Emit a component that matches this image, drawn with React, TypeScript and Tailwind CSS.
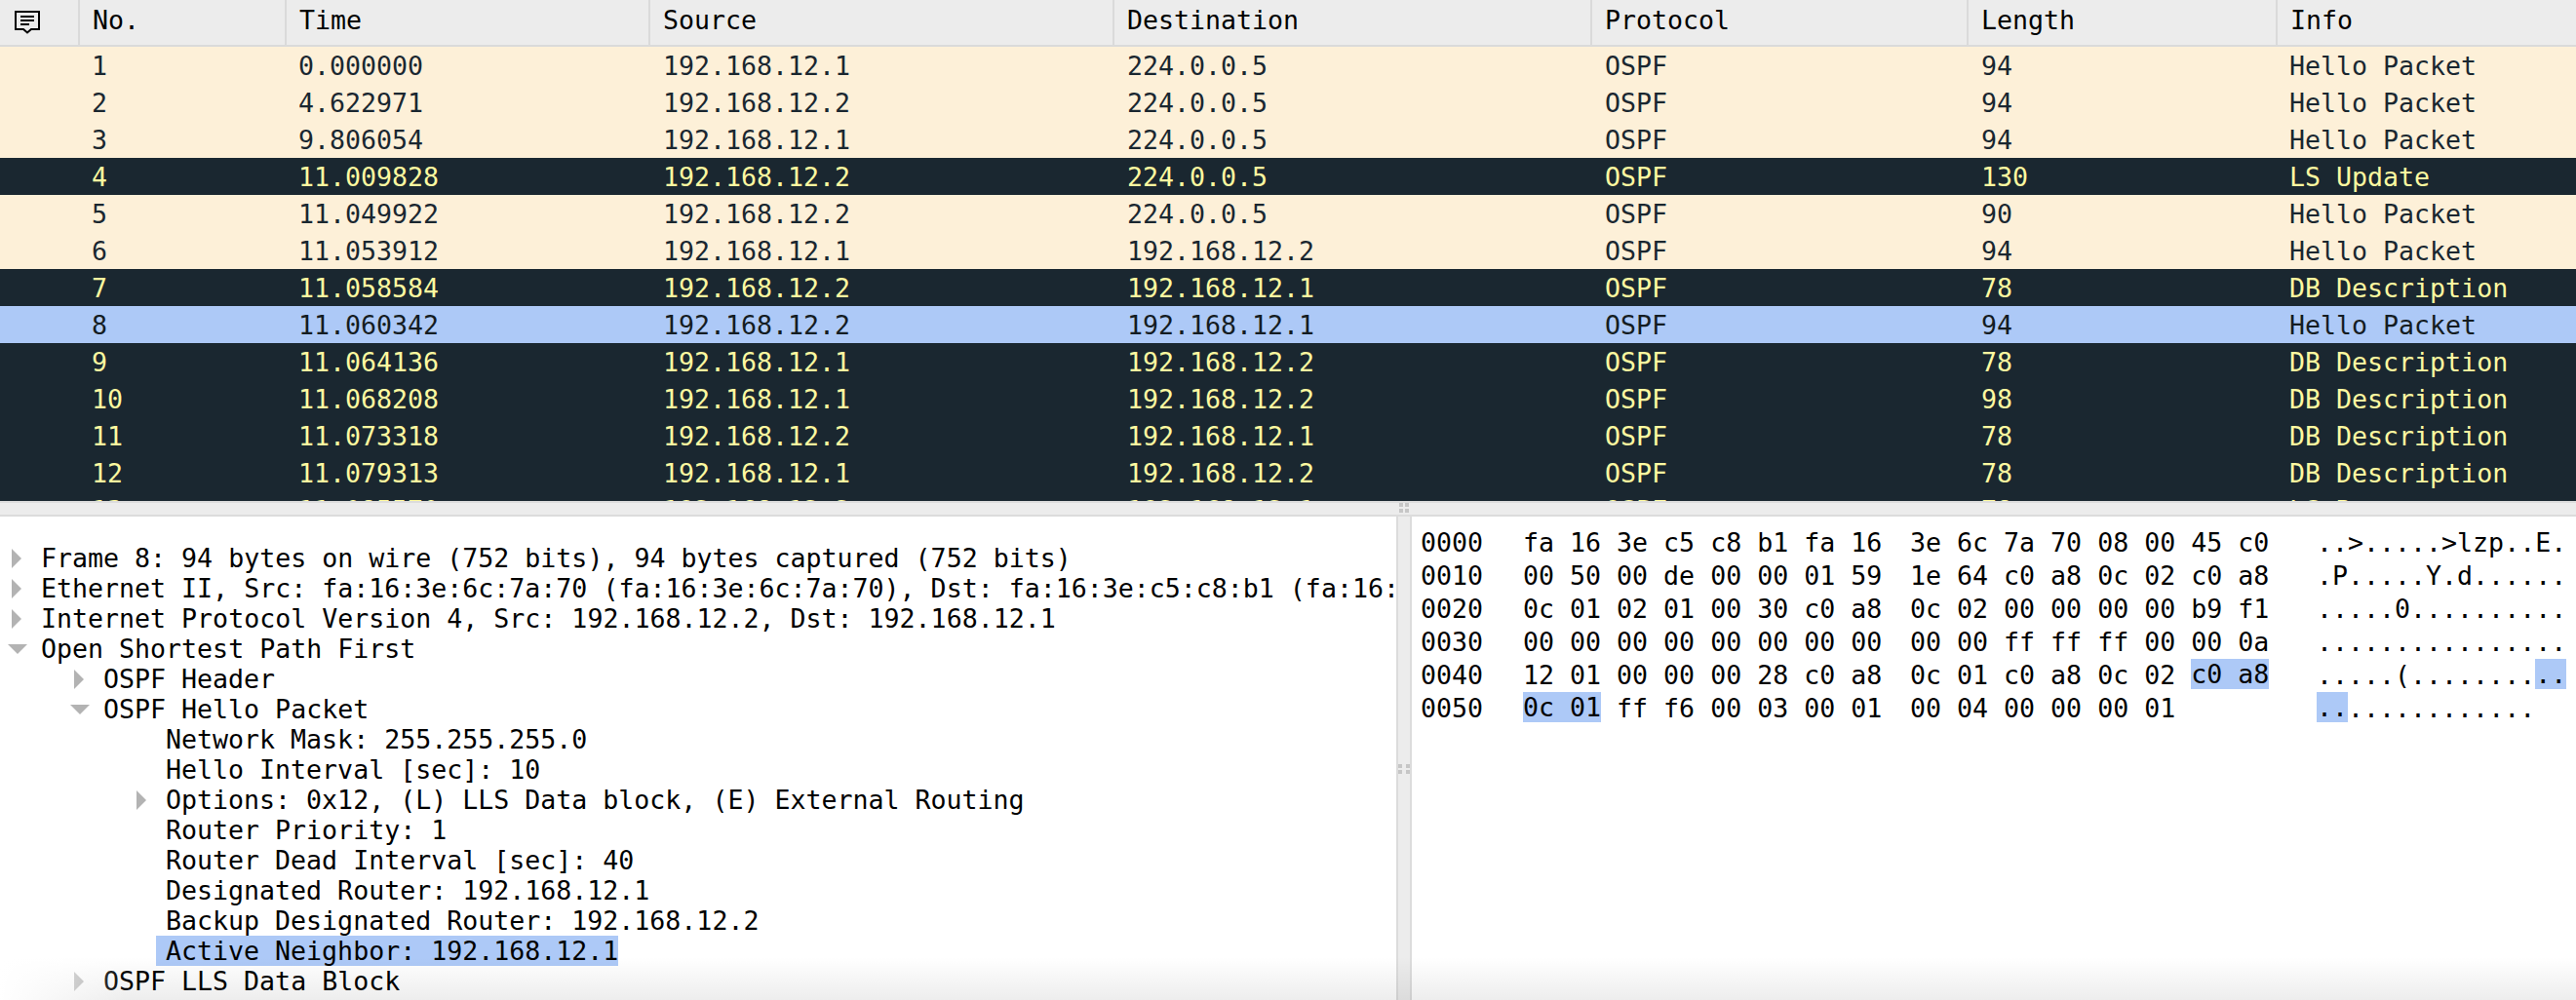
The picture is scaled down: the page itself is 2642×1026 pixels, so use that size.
import React from "react";

type Packet = {
  no: number;
  time: string;
  src: string;
  dst: string;
  len: number;
  info: string;
  kind: "light" | "dark" | "selected";
};

const A = "192.168.12.1";
const B = "192.168.12.2";
const M = "224.0.0.5";

const packets: Packet[] = [
  { no: 1, time: "0.000000", src: A, dst: M, len: 94, info: "Hello Packet", kind: "light" },
  { no: 2, time: "4.622971", src: B, dst: M, len: 94, info: "Hello Packet", kind: "light" },
  { no: 3, time: "9.806054", src: A, dst: M, len: 94, info: "Hello Packet", kind: "light" },
  { no: 4, time: "11.009828", src: B, dst: M, len: 130, info: "LS Update", kind: "dark" },
  { no: 5, time: "11.049922", src: B, dst: M, len: 90, info: "Hello Packet", kind: "light" },
  { no: 6, time: "11.053912", src: A, dst: B, len: 94, info: "Hello Packet", kind: "light" },
  { no: 7, time: "11.058584", src: B, dst: A, len: 78, info: "DB Description", kind: "dark" },
  { no: 8, time: "11.060342", src: B, dst: A, len: 94, info: "Hello Packet", kind: "selected" },
  { no: 9, time: "11.064136", src: A, dst: B, len: 78, info: "DB Description", kind: "dark" },
  { no: 10, time: "11.068208", src: A, dst: B, len: 98, info: "DB Description", kind: "dark" },
  { no: 11, time: "11.073318", src: B, dst: A, len: 78, info: "DB Description", kind: "dark" },
  { no: 12, time: "11.079313", src: A, dst: B, len: 78, info: "DB Description", kind: "dark" },
  { no: 13, time: "11.085570", src: B, dst: A, len: 78, info: "LS Request", kind: "dark" },
];

const COLS = "grid grid-cols-[82px_212px_373px_476px_490px_386px_317px_306px]";

const kindClass = {
  light: "bg-[#fdf0d8] text-[#1a2730]",
  dark: "bg-[#1a2730] text-[#fdf9a0]",
  selected: "bg-[#adc9f7] text-[#141c22]",
};

const tree: { level: number; text: string; arrow?: "closed" | "open"; active?: boolean }[] = [
  { level: 0, arrow: "closed", text: "Frame 8: 94 bytes on wire (752 bits), 94 bytes captured (752 bits)" },
  { level: 0, arrow: "closed", text: "Ethernet II, Src: fa:16:3e:6c:7a:70 (fa:16:3e:6c:7a:70), Dst: fa:16:3e:c5:c8:b1 (fa:16:3e:c5:c8:b1)" },
  { level: 0, arrow: "closed", text: "Internet Protocol Version 4, Src: 192.168.12.2, Dst: 192.168.12.1" },
  { level: 0, arrow: "open", text: "Open Shortest Path First" },
  { level: 1, arrow: "closed", text: "OSPF Header" },
  { level: 1, arrow: "open", text: "OSPF Hello Packet" },
  { level: 2, text: "Network Mask: 255.255.255.0" },
  { level: 2, text: "Hello Interval [sec]: 10" },
  { level: 2, arrow: "closed", text: "Options: 0x12, (L) LLS Data block, (E) External Routing" },
  { level: 2, text: "Router Priority: 1" },
  { level: 2, text: "Router Dead Interval [sec]: 40" },
  { level: 2, text: "Designated Router: 192.168.12.1" },
  { level: 2, text: "Backup Designated Router: 192.168.12.2" },
  { level: 2, text: "Active Neighbor: 192.168.12.1", active: true },
  { level: 1, arrow: "closed", text: "OSPF LLS Data Block" },
];

const levelPad = ["pl-[42px]", "pl-[106px]", "pl-[170px]"];
const arrowLeft = ["left-[11px]", "left-[75px]", "left-[139px]"];

const Arrow = ({ open }: { open: boolean }) =>
  open ? (
    <svg width="20" height="12" viewBox="0 0 20 12" className="-ml-[3px]">
      <path d="M0 1h20L10 11z" fill="#b3b3b3" />
    </svg>
  ) : (
    <svg width="12" height="20" viewBox="0 0 12 20">
      <path d="M1 0l10 10L1 20z" fill="#b3b3b3" />
    </svg>
  );

const hex: { offset: string; left: React.ReactNode; right: React.ReactNode; ascii: React.ReactNode }[] = [
  { offset: "0000", left: "fa 16 3e c5 c8 b1 fa 16", right: "3e 6c 7a 70 08 00 45 c0", ascii: "..>.....>lzp..E." },
  { offset: "0010", left: "00 50 00 de 00 00 01 59", right: "1e 64 c0 a8 0c 02 c0 a8", ascii: ".P.....Y.d......" },
  { offset: "0020", left: "0c 01 02 01 00 30 c0 a8", right: "0c 02 00 00 00 00 b9 f1", ascii: ".....0.........." },
  { offset: "0030", left: "00 00 00 00 00 00 00 00", right: "00 00 ff ff ff 00 00 0a", ascii: "................" },
  {
    offset: "0040",
    left: "12 01 00 00 00 28 c0 a8",
    right: (
      <>
        0c 01 c0 a8 0c 02 <Hl>c0 a8</Hl>
      </>
    ),
    ascii: (
      <>
        .....(........<Hl>..</Hl>
      </>
    ),
  },
  {
    offset: "0050",
    left: (
      <>
        <Hl>0c 01</Hl> ff f6 00 03 00 01
      </>
    ),
    right: "00 04 00 00 00 01",
    ascii: (
      <>
        <Hl>..</Hl>............
      </>
    ),
  },
];

function Hl({ children }: { children: React.ReactNode }) {
  return <span className="inline-block h-[31px] leading-[31px] bg-[#adc9f7] align-top">{children}</span>;
}

export default function App() {
  return (
    <div className="relative w-[2642px] h-[1026px] overflow-hidden bg-white flex flex-col font-['DejaVu_Sans_Mono',monospace] text-[26.6px] text-black whitespace-pre">
      {/* packet list header */}
      <div className={`${COLS} h-[48px] shrink-0 bg-[#ececec] border-b-2 border-[#dadada] leading-[42px]`}>
        <div className="border-r-2 border-[#dadada] flex items-start pl-[14px] pt-[10px]">
          <svg width="28" height="25" viewBox="0 0 28 25" fill="none" stroke="#000" strokeWidth="2">
            <path d="M2 2h24v18H18l-4 3.5-4-3.5H2z" />
            <path d="M7 7h14M7 11h14M7 15h9" />
          </svg>
        </div>
        {["No.", "Time", "Source", "Destination", "Protocol", "Length", "Info"].map((h, i) => (
          <div key={h} className={`pl-[13px] ${i < 6 ? "border-r-2 border-[#dadada]" : ""}`}>
            {h}
          </div>
        ))}
      </div>

      {/* packet list */}
      <div className="h-[466px] shrink-0 overflow-hidden">
        {packets.map((p) => (
          <div key={p.no} className={`${COLS} h-[38px] leading-[40px] ${kindClass[p.kind]}`}>
            <div />
            <div className="pl-[12px]">{p.no}</div>
            <div className="pl-[12px]">{p.time}</div>
            <div className="pl-[13px]">{p.src}</div>
            <div className="pl-[13px]">{p.dst}</div>
            <div className="pl-[13px]">OSPF</div>
            <div className="pl-[13px]">{p.len}</div>
            <div className="pl-[12px]">{p.info}</div>
          </div>
        ))}
      </div>

      {/* horizontal splitter */}
      <div className="relative h-[16px] shrink-0 bg-[#ececec] border-y-2 border-[#dcdcdc]">
        <div className="absolute left-[1435px] top-0 grid grid-cols-2 gap-[2px]">
          <span className="w-[4px] h-[4px] bg-[#c6c6c6]" />
          <span className="w-[4px] h-[4px] bg-[#c6c6c6]" />
          <span className="w-[4px] h-[4px] bg-[#c6c6c6]" />
          <span className="w-[4px] h-[4px] bg-[#c6c6c6]" />
        </div>
      </div>

      <div className="flex-1 flex min-h-0">
        {/* protocol tree */}
        <div className="w-[1432px] shrink-0 overflow-hidden pt-[27px] leading-[31px]">
          {tree.map((t, i) => (
            <div key={i} className={`relative h-[31px] ${levelPad[t.level]}`}>
              {t.arrow && (
                <span className={`absolute top-0 h-[31px] flex items-center ${arrowLeft[t.level]}`}>
                  <Arrow open={t.arrow === "open"} />
                </span>
              )}
              {t.active ? <span className="inline-block bg-[#adc9f7] -ml-[10px] pl-[10px]">{t.text}</span> : t.text}
            </div>
          ))}
        </div>

        {/* vertical splitter */}
        <div className="relative w-[16px] shrink-0 bg-[#ececec] border-x-2 border-[#dcdcdc]">
          <div className="absolute left-0 top-[254px] grid grid-cols-2 gap-x-[4px] gap-y-[2px]">
            <span className="w-[4px] h-[4px] bg-[#c6c6c6]" />
            <span className="w-[4px] h-[4px] bg-[#c6c6c6]" />
            <span className="w-[4px] h-[4px] bg-[#c6c6c6]" />
            <span className="w-[4px] h-[4px] bg-[#c6c6c6]" />
          </div>
        </div>

        {/* hex dump */}
        <div className="flex-1 pt-[10px] pl-[9px] leading-[34px]">
          {hex.map((r) => (
            <div key={r.offset} className="flex h-[34px]">
              <div className="w-[105px]">{r.offset}</div>
              <div className="w-[397px]">{r.left}</div>
              <div className="w-[417px]">{r.right}</div>
              <div>{r.ascii}</div>
            </div>
          ))}
        </div>
      </div>

      {/* window shadow along the bottom edge, fading out at the left corner */}
      <div className="absolute left-0 right-0 bottom-0 h-[44px] pointer-events-none bg-gradient-to-b from-transparent to-black/[0.07]" />
      <div className="absolute left-0 bottom-0 w-[130px] h-[44px] pointer-events-none bg-gradient-to-r from-white to-transparent" />
    </div>
  );
}
